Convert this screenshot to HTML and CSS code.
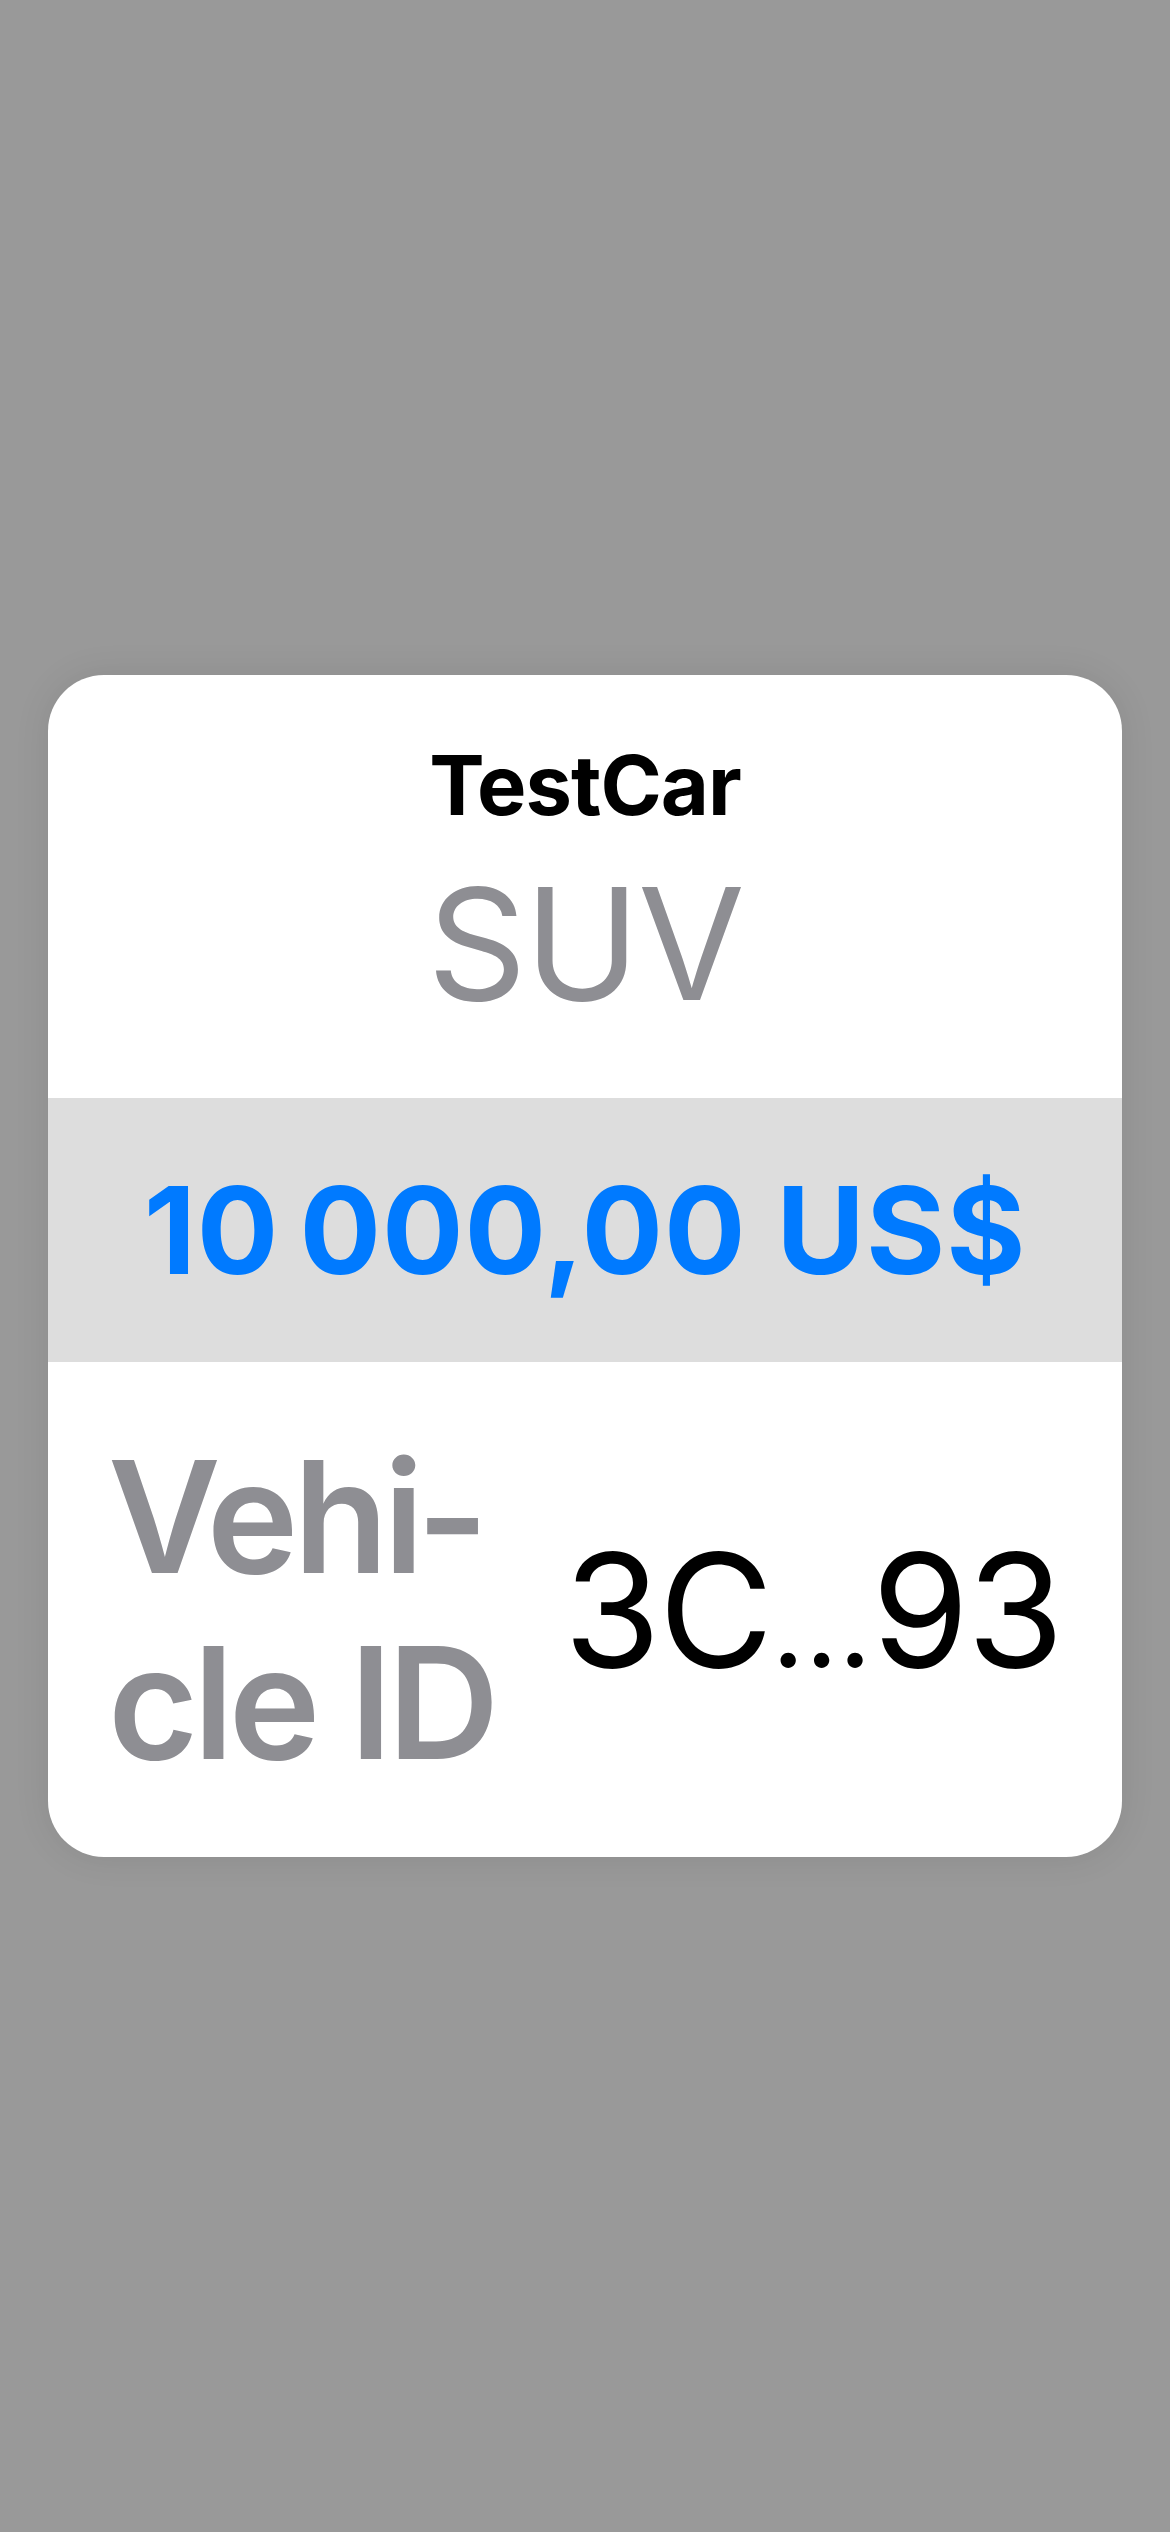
FILE: index.html
```html
<!DOCTYPE html>
<html lang="en">
<head>
<meta charset="utf-8">
<title>TestCar</title>
<link rel="stylesheet" href="styles.css">
</head>
<body>
<main class="page">
  <section class="card">
    <header class="card-head">
      <div class="make">TestCar</div>
      <div class="type">SUV</div>
    </header>
    <div class="price-band">
      <span class="price">10&#8239;000,00&nbsp;US$</span>
    </div>
    <div class="info-row">
      <div class="info-label">Vehi&shy;cle&nbsp;ID</div>
      <div class="info-value">3C<span class="ellipsis">…</span>93</div>
    </div>
  </section>
</main>
</body>
</html>
```
FILE: styles.css
```css
html, body {
  margin: 0;
  padding: 0;
}
body {
  background: #999999;
  font-family: Inter, "Noto Sans", "DejaVu Sans", sans-serif;
}
.page {
  min-height: 100vh;
  display: flex;
  align-items: center;
  justify-content: center;
}
.card {
  width: 1074px;
  background: #ffffff;
  border-radius: 56px;
  overflow: hidden;
  box-shadow: 0 0 36px rgba(0, 0, 0, 0.09);
}
.card-head {
  padding: 60px 60px 46px;
  text-align: center;
}
.make {
  font-size: 83px;
  font-weight: 700;
  line-height: 100px;
  letter-spacing: -1px;
  color: #000000;
}
.type {
  font-size: 155px;
  font-weight: 400;
  line-height: 217px;
  letter-spacing: -2px;
  color: #8e8e93;
}
.price-band {
  height: 264px;
  background: #dddddd;
  display: flex;
  align-items: center;
  justify-content: center;
}
.price {
  font-size: 121px;
  font-weight: 700;
  letter-spacing: 1px;
  color: #007aff;
  white-space: nowrap;
}
.info-row {
  height: 495px;
  padding: 0 60px;
  display: flex;
  align-items: center;
  justify-content: space-between;
}
.info-label {
  width: 400px;
  font-size: 155px;
  font-weight: 600;
  line-height: 186px;
  letter-spacing: -5px;
  color: #8e8e93;
  hyphens: manual;
}
.info-value {
  font-size: 157px;
  letter-spacing: -2px;
  color: #000000;
  white-space: nowrap;
}
.ellipsis {
  font-size: 116px;
  letter-spacing: 0;
}
```
